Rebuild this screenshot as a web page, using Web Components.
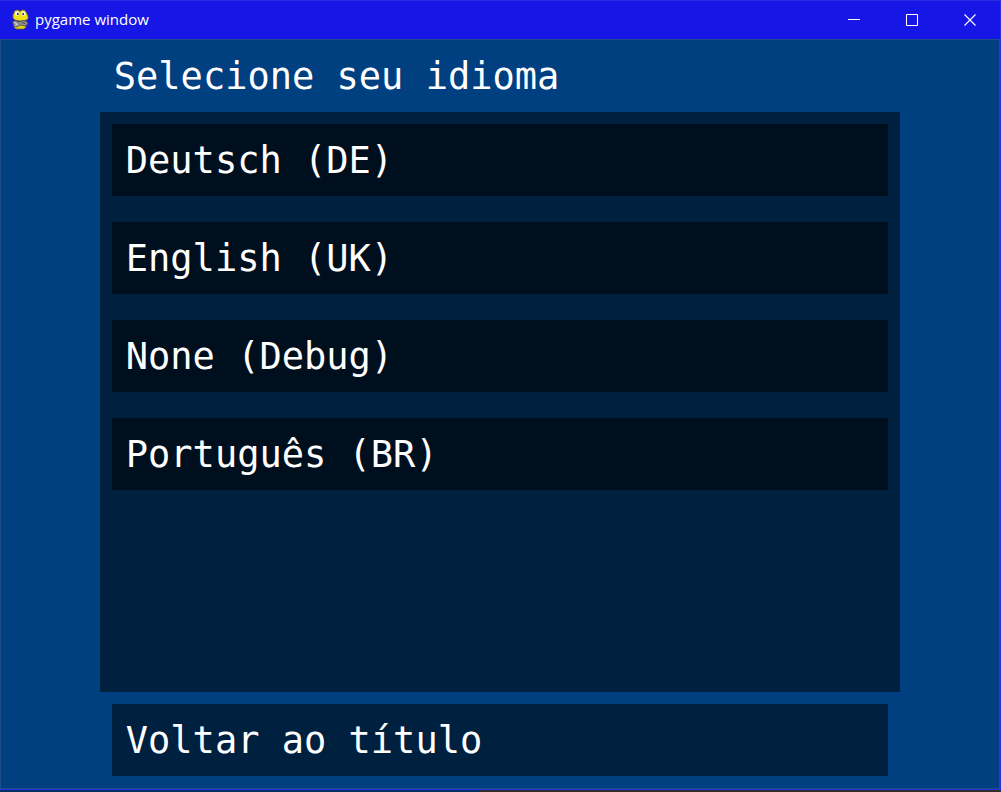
<!DOCTYPE html>
<html lang="pt-BR">
<head>
<meta charset="utf-8">
<title>pygame window</title>
<style>
html, body { height: 100%; margin: 0; }
body { background: #2b2b2b; }
</style>
</head>
<body>
<game-window caption="pygame window">
  <language-menu heading="Selecione seu idioma">
    <menu-option>Deutsch (DE)</menu-option>
    <menu-option>English (UK)</menu-option>
    <menu-option>None (Debug)</menu-option>
    <menu-option>Português (BR)</menu-option>
    <menu-option slot="back" tone="light">Voltar ao título</menu-option>
  </language-menu>
</game-window>

<script>
class BaseElement extends HTMLElement {
  constructor() {
    super();
    this.attachShadow({ mode: "open" });
  }
}

customElements.define("snake-icon", class extends BaseElement {
  connectedCallback() {
    this.shadowRoot.innerHTML = `
      <style>:host { display: block; width: 20px; height: 22px; } svg { display: block; }</style>
      <svg width="20" height="22" viewBox="0 0 20 22" aria-hidden="true">
        <path d="M3 14 6 13 14 14 15 18 13 20 5 20 3 18Z" fill="#e6d414" stroke="#6c651c" stroke-width=".8"/>
        <path d="M3 4 4 1.5 7 1 9 2.5 11 1 14 1.5 15.5 4 17 7 17 10 14 11.5 9 12 4 11 2 9 2 6Z" fill="#f0e01c" stroke="#77701c" stroke-width=".8"/>
        <path d="M1.500 13 4 11.500 8 13 12 11.500 16 12.500 17 15 14 17 9 16 6 18 3 17Z" fill="#8e8f92" stroke="#4c4c50" stroke-width=".8"/>
        <path d="M3 13.500 6 14.500M4 16.500 7 15.500" stroke="#d5d5d8" stroke-width="1.300"/>
        <path d="M11 13.500 14 14.500" stroke="#5b4a50" stroke-width="1.300"/>
        <ellipse cx="6" cy="4.500" rx="2" ry="2.300" fill="#f5f5ee"/>
        <ellipse cx="12.500" cy="4.500" rx="2" ry="2.300" fill="#f5f5ee"/>
        <path d="M6 4h1.500v2H6zM11.500 4H13v2h-1.500z" fill="#343430"/>
      </svg>`;
  }
});

customElements.define("game-window", class extends BaseElement {
  connectedCallback() {
    this.shadowRoot.innerHTML = `
      <style>
        :host { display: flex; flex-direction: column; box-sizing: border-box; height: 100vh; padding-bottom: 2px;
          background: linear-gradient(to right, #003366 48%, #2f2f2f 48%); }
        .frame { flex: 1; min-height: 0; display: flex; flex-direction: column; border: solid #2b2be0; border-width: 1px 1px 1px 0; background: #1616e6; }
        header { display: flex; align-items: center; height: 38px; flex: none; padding: 0 1px 0 11px; color: #fff;
          font: 15px/20px "Open Sans", "Noto Sans", sans-serif; }
        .caption { flex: 1; padding: 0 0 2px 4px; }
        button { width: 58px; height: 38px; padding: 0; border: 0; background: none; color: #fff; display: grid; place-items: center; }
        button svg { display: block; }
        main { flex: 1; min-height: 0; display: flex; border: 1px solid #1c4f88; background: #004080; }
        ::slotted(*) { flex: 1; }
      </style>
      <div class="frame">
        <header>
          <snake-icon></snake-icon><span class="caption">${this.getAttribute("caption")}</span>
          <button aria-label="Minimizar"><svg width="12" height="12"><path d="M0 5.5h12" stroke="#fff"/></svg></button>
          <button aria-label="Maximizar"><svg width="12" height="12"><path d="M.5.5h11v11H.5z" fill="none" stroke="#fff"/></svg></button>
          <button aria-label="Fechar"><svg width="12" height="12"><path d="M.5.5l11 11M11.5.5l-11 11" stroke="#fff" stroke-width="1.1"/></svg></button>
        </header>
        <main><slot></slot></main>
      </div>`;
  }
});

customElements.define("language-menu", class extends BaseElement {
  connectedCallback() {
    this.shadowRoot.innerHTML = `
      <style>
        :host { display: flex; flex-direction: column; box-sizing: border-box; padding: 0 calc(10% - 1px) 12px; color: #fff;
          font: 37px/70px "DejaVu Sans Mono", monospace; }
        h1 { margin: 0; padding: 2px 0 0 14px; font: inherit; white-space: nowrap; }
        section { flex: 1; display: flex; flex-direction: column; gap: 26px; padding: 12px; background: #00203f; }
        footer { padding: 12px 12px 0; }
      </style>
      <h1>${this.getAttribute("heading")}</h1>
      <section><slot></slot></section>
      <footer><slot name="back"></slot></footer>`;
  }
});

customElements.define("menu-option", class extends BaseElement {
  connectedCallback() {
    this.shadowRoot.innerHTML = `
      <style>
        :host { display: block; }
        button { display: block; width: 100%; height: 72px; padding: 2px 14px 0; border: 0; color: inherit; font: inherit;
          text-align: left; white-space: nowrap; background: #000f1e; }
        :host([tone="light"]) button { background: #00203f; }
      </style>
      <button><slot></slot></button>`;
  }
});
</script>
</body>
</html>
